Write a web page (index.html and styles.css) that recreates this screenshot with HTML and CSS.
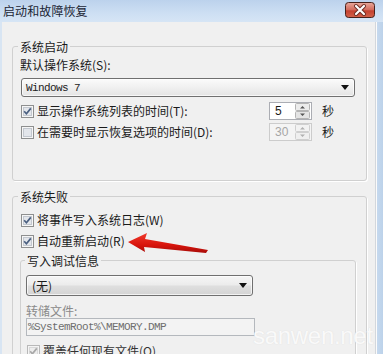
FILE: index.html
```html
<!DOCTYPE html>
<html>
<head>
<meta charset="utf-8">
<link rel="stylesheet" href="styles.css">
</head>
<body>
<div class="window">
  <div class="titlebar">
    <span class="title">启动和故障恢复</span>
    <span class="close">
      <svg width="30" height="16" viewBox="0 0 30 16">
        <defs>
          <linearGradient id="cg" x1="0" y1="0" x2="0" y2="1">
            <stop offset="0" stop-color="#e9a99c"/>
            <stop offset="0.5" stop-color="#d26a5b"/>
            <stop offset="0.55" stop-color="#c4402f"/>
            <stop offset="1" stop-color="#d2624a"/>
          </linearGradient>
        </defs>
        <rect x="0.5" y="0.5" width="29" height="15" rx="3" fill="url(#cg)" stroke="#47211b"/>
        <path d="M11 4 L19 12 M19 4 L11 12" stroke="#6b2b22" stroke-width="4" stroke-linecap="round"/>
        <path d="M11 4 L19 12 M19 4 L11 12" stroke="#ffffff" stroke-width="2.2" stroke-linecap="round"/>
      </svg>
    </span>
  </div>
  <div class="frame">
    <div class="lframe"></div>
    <div class="client">
      <fieldset class="group g1">
        <legend>系统启动</legend>
        <div class="label">默认操作系统(S):</div>
        <div class="combo os"><span class="mono">Windows 7</span><span class="arrow"></span></div>
        <div class="row">
          <span class="cb">
            <svg width="13" height="13" viewBox="0 0 13 13"><rect x="0.5" y="0.5" width="12" height="12" fill="#f6f6f6" stroke="#8e8f8f"/><rect x="2.5" y="2.5" width="8" height="8" fill="#e3e6eb" stroke="#c3c8cf"/><path d="M3.2 6.3 L5.4 8.8 L9.8 3.4" stroke="#4a5f80" stroke-width="1.7" fill="none"/></svg>
          </span>
          <span class="text grow">显示操作系统列表的时间(T):</span>
          <span class="spin">
            <span class="val">5</span>
            <span class="btns">
              <svg width="15" height="16" viewBox="0 0 15 16"><rect x="0.5" y="0.5" width="14" height="7" rx="1" fill="#ececec" stroke="#b4b4b4"/><rect x="0.5" y="8.5" width="14" height="7" rx="1" fill="#e4e4e4" stroke="#b4b4b4"/><path d="M5 5.5 L7.5 3 L10 5.5 Z M5 10.5 L7.5 13 L10 10.5 Z" fill="#555"/></svg>
            </span>
          </span>
          <span class="sec">秒</span>
        </div>
        <div class="row">
          <span class="cb">
            <svg width="13" height="13" viewBox="0 0 13 13"><rect x="0.5" y="0.5" width="12" height="12" fill="#f6f6f6" stroke="#8e8f8f"/><rect x="2.5" y="2.5" width="8" height="8" fill="#e3e6eb" stroke="#c3c8cf"/></svg>
          </span>
          <span class="text grow">在需要时显示恢复选项的时间(D):</span>
          <span class="spin dis">
            <span class="val">30</span>
            <span class="btns">
              <svg width="15" height="16" viewBox="0 0 15 16"><rect x="0.5" y="0.5" width="14" height="7" rx="1" fill="#f2f2f2" stroke="#cfcfcf"/><rect x="0.5" y="8.5" width="14" height="7" rx="1" fill="#efefef" stroke="#cfcfcf"/><path d="M5 5.5 L7.5 3 L10 5.5 Z M5 10.5 L7.5 13 L10 10.5 Z" fill="#b0b0b0"/></svg>
            </span>
          </span>
          <span class="sec">秒</span>
        </div>
      </fieldset>

      <fieldset class="group g2">
        <legend>系统失败</legend>
        <div class="row">
          <span class="cb">
            <svg width="13" height="13" viewBox="0 0 13 13"><rect x="0.5" y="0.5" width="12" height="12" fill="#f6f6f6" stroke="#8e8f8f"/><rect x="2.5" y="2.5" width="8" height="8" fill="#e3e6eb" stroke="#c3c8cf"/><path d="M3.2 6.3 L5.4 8.8 L9.8 3.4" stroke="#4a5f80" stroke-width="1.7" fill="none"/></svg>
          </span>
          <span class="text">将事件写入系统日志(W)</span>
        </div>
        <div class="row">
          <span class="cb">
            <svg width="13" height="13" viewBox="0 0 13 13"><rect x="0.5" y="0.5" width="12" height="12" fill="#f6f6f6" stroke="#8e8f8f"/><rect x="2.5" y="2.5" width="8" height="8" fill="#e3e6eb" stroke="#c3c8cf"/><path d="M3.2 6.3 L5.4 8.8 L9.8 3.4" stroke="#4a5f80" stroke-width="1.7" fill="none"/></svg>
          </span>
          <span class="text">自动重新启动(R)</span>
        </div>
        <fieldset class="group sub">
          <legend>写入调试信息</legend>
          <div class="combo none"><span class="ctext">(无)</span><span class="arrow"></span></div>
          <div class="label gray">转储文件:</div>
          <div class="input"><span class="mono">%SystemRoot%\MEMORY.DMP</span></div>
          <div class="row">
            <span class="cb">
              <svg width="13" height="13" viewBox="0 0 13 13"><rect x="0.5" y="0.5" width="12" height="12" fill="#f4f4f4" stroke="#b8b8b8"/><rect x="2.5" y="2.5" width="8" height="8" fill="#ededed" stroke="#d8d8d8"/><path d="M3.2 6.3 L5.4 8.8 L9.8 3.4" stroke="#a8a8a8" stroke-width="1.7" fill="none"/></svg>
            </span>
            <span class="text">覆盖任何现有文件(O)</span>
          </div>
        </fieldset>
      </fieldset>
    </div>
    <div class="rframe"></div>
  </div>

  <svg class="arrowmark" width="383" height="354" viewBox="0 0 383 354">
    <defs>
      <linearGradient id="ag" x1="0" y1="0" x2="0" y2="1">
        <stop offset="0" stop-color="#f03a2c"/>
        <stop offset="0.6" stop-color="#d8140c"/>
        <stop offset="1" stop-color="#a80c08"/>
      </linearGradient>
    </defs>
    <polygon points="128,242 147,233 145,239 208,250 206,253 144,247 145,252" fill="url(#ag)"/>
  </svg>
  <div class="watermark">sanwen.net</div>
</div>
</body>
</html>
```
FILE: styles.css
```css
* { box-sizing: border-box; }
html, body { margin: 0; padding: 0; }
body {
  width: 383px;
  height: 354px;
  overflow: hidden;
  font-family: "Noto Sans CJK SC", "Liberation Sans", sans-serif;
  font-size: 12px;
  color: #1a1a1a;
}
.window {
  position: relative;
  width: 383px;
  height: 354px;
  display: flex;
  flex-direction: column;
  overflow: hidden;
  background: #f0f0f0;
}
.titlebar {
  height: 22px;
  flex: none;
  display: flex;
  align-items: flex-start;
  background: linear-gradient(to bottom, #bcd2ec, #cddff3 60%, #d6e5f5);
  padding-left: 3px;
}
.title {
  line-height: 22px;
  font-size: 12px;
  color: #1b2534;
  letter-spacing: 0.1px;
}
.close {
  margin-left: auto;
  margin-right: 8px;
  margin-top: 2px;
  height: 16px;
  display: block;
}
.close svg { display: block; }
.frame {
  flex: 1;
  display: flex;
  min-height: 0;
}
.lframe {
  width: 2px;
  background: #d8e5f3;
}
.client {
  flex: 1;
  background: #f0f0f0;
  padding: 0 8px 0 10px;
  overflow: hidden;
}
.rframe {
  width: 8px;
  background: linear-gradient(to right, #d3d7dc 0 1px, #fbfbfb 1px 2px, #c6d9ee 2px, #bcd2ea);
}
.group {
  border: 1px solid #d0d0d0;
  border-radius: 3px;
  margin: 0;
  min-width: 0;
  box-shadow: 1px 1px 0 #ffffff;
}
.group > legend {
  padding: 0 2px;
  margin-left: -2px;
  line-height: 17px;
  font-size: 12px;
  color: #1a1a1a;
}
.g1 {
  margin-top: 16px;
  padding: 2px 11px 39px 7px;
}
.g2 {
  margin-top: 7px;
  padding: 3px 10px 20px 7px;
}
.sub {
  margin-top: 2px;
  padding: 6px 10px 10px 5px;
  box-shadow: 1px 1px 0 #ffffff;
}
.sub > legend { margin-left: -1px; }
.label {
  line-height: 16px;
}
.label.gray {
  color: #8a8a8a;
  line-height: 14px;
  margin-top: 8px;
}
.mono {
  font-family: "Liberation Mono", monospace;
  font-size: 11px;
  letter-spacing: -0.6px;
}
.combo {
  display: flex;
  align-items: center;
  border: 1px solid #707070;
  border-radius: 3px;
  background: linear-gradient(to bottom, #f6f6f6, #ececec 45%, #dedede 55%, #d4d4d4);
  box-shadow: inset 0 0 0 1px rgba(255,255,255,0.7);
  padding: 0 5px 0 4px;
}
.combo .arrow {
  margin-left: auto;
  width: 0;
  height: 0;
  border-left: 4px solid transparent;
  border-right: 4px solid transparent;
  border-top: 5px solid #111;
}
.combo.os {
  margin-top: 5px;
  margin-left: 1px;
  height: 19px;
  background: linear-gradient(to bottom, #fbfbfb, #f0f0f0 50%, #e3e3e3);
}
.combo.os .mono { color: #222; }
.combo.none {
  width: 227px;
  height: 21px;
  margin-left: 0;
  padding-left: 5px;
}
.ctext { line-height: 19px; }
.input {
  width: 229px;
  height: 18px;
  border: 1px solid #b4b8bd;
  background: #f3f3f3;
  display: flex;
  align-items: center;
  padding-left: 1px;
}
.input .mono { color: #6e6e6e; }
.row {
  display: flex;
  align-items: center;
  height: 18px;
  margin-top: 3px;
}
.g1 .combo.os + .row { margin-top: 5px; }
.sub .row { margin-top: 6px; }
.cb {
  width: 13px;
  height: 13px;
  margin-left: 1px;
  flex: none;
  display: block;
}
.cb svg { display: block; }
.text {
  margin-left: 3px;
  line-height: 18px;
  white-space: nowrap;
}
.grow { flex: 1; }
.sub .text { color: #333; }
.spin {
  width: 43px;
  height: 18px;
  border: 1px solid #abadb3;
  background: #ffffff;
  display: flex;
  align-items: center;
  flex: none;
}
.spin .val {
  flex: 1;
  padding-left: 5px;
  font-family: "Liberation Sans", sans-serif;
  font-size: 12px;
  line-height: 16px;
}
.spin .btns { width: 15px; height: 16px; margin-right: 1px; }
.spin .btns svg { display: block; }
.spin.dis { border-color: #cccccc; background: #f4f4f4; }
.spin.dis .val { color: #a6a6a6; }
.sec {
  margin-left: 10px;
  margin-right: 21px;
  line-height: 18px;
}
.arrowmark {
  position: absolute;
  left: 0;
  top: 0;
  pointer-events: none;
}
.watermark {
  position: absolute;
  left: 253px;
  top: 322px;
  font-family: "Liberation Sans", sans-serif;
  font-size: 24px;
  line-height: 28px;
  color: rgba(255, 255, 255, 0.85);
  text-shadow: 0 0 1px rgba(200, 200, 200, 0.5);
  letter-spacing: -0.3px;
}
```
